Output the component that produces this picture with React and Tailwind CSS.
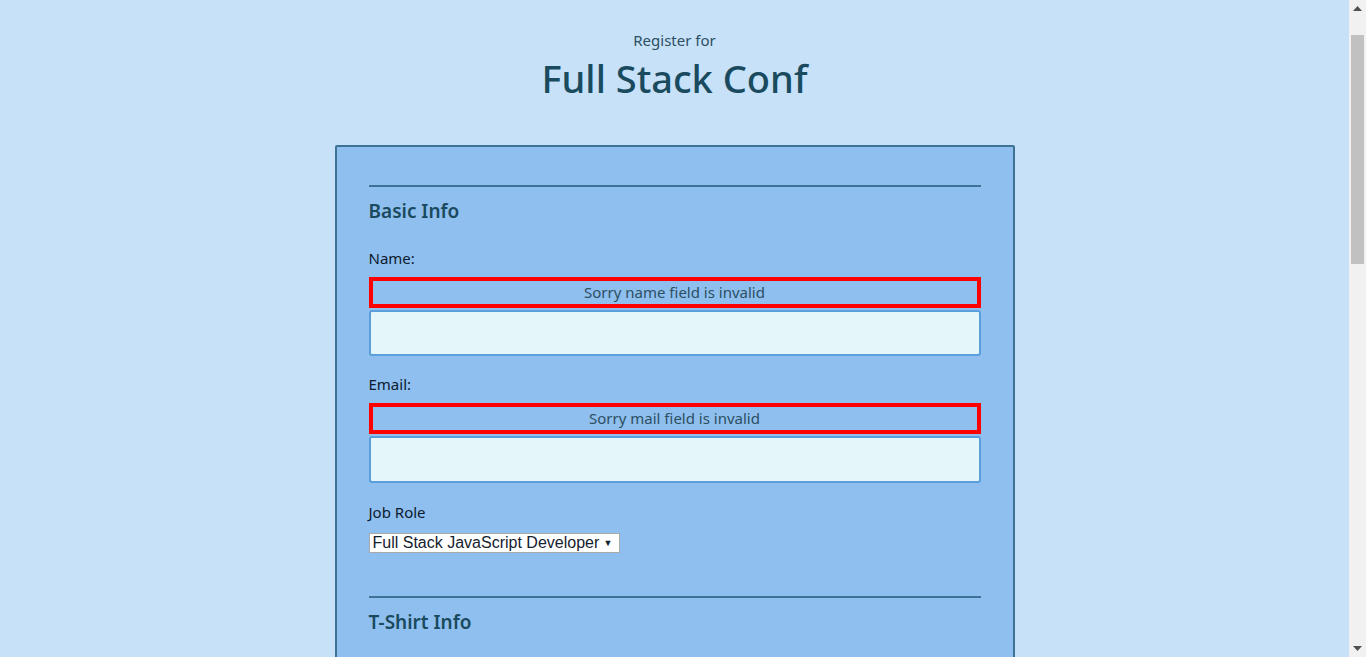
export default function App() {
  const font = { fontFamily: '"Noto Sans", "Open Sans", sans-serif' };
  return (
    <div className="flex items-start bg-[#c6e1f8]">
      <div className="flex-1 min-h-[1400px] text-[#184f68]" style={font}>
        <header className="pt-[30px] pb-[39px] text-center">
          <p className="text-[15px] leading-[20px] text-[#2c4f62]">Register for</p>
          <h1 className="text-[38px] leading-[56px] font-medium text-[#1a4a5e]">Full Stack Conf</h1>
        </header>

        <form className="mx-auto w-[680px] bg-[#8fbfee] border-2 border-[#3b7296] rounded-[2px] px-[32px] pt-[38px] pb-[40px]">
          <fieldset>
            <hr className="border-0 border-t-2 border-[#3b7296]" />
            <h2 className="mt-[11px] text-[19px] leading-[26px] font-semibold text-[#1a4a5e]">Basic Info</h2>

            <label className="block mt-[24px] text-[15px] leading-[20px] text-[#0b1a2e]">Name:</label>
            <div className="mt-[9px] border-4 border-[#ff0000] h-[31px] flex items-center justify-center text-[15px] text-[#2c4f62]">
              Sorry name field is invalid
            </div>
            <div className="mt-[2px] h-[46px] bg-[#e4f6fa] border-2 border-[#5a9fdc] rounded-[3px]" />

            <label className="block mt-[18px] text-[15px] leading-[20px] text-[#0b1a2e]">Email:</label>
            <div className="mt-[9px] border-4 border-[#ff0000] h-[31px] flex items-center justify-center text-[15px] text-[#2c4f62]">
              Sorry mail field is invalid
            </div>
            <div className="mt-[2px] h-[47px] bg-[#e4f6fa] border-2 border-[#5a9fdc] rounded-[3px]" />

            <label className="block mt-[19px] text-[15px] leading-[20px] text-[#0b1a2e]">Job Role</label>
            <div className="mt-[11px] w-[251px] h-[20px] bg-white border border-[#a9a9a9] flex items-center justify-between pl-[3px] pr-[6px] text-[16px] leading-[18px] text-[#14222e]" style={{ fontFamily: '"Liberation Sans", Arial, sans-serif' }}>
              <span>Full Stack JavaScript Developer</span>
              <span className="text-[9px] leading-none">▼</span>
            </div>
          </fieldset>

          <fieldset className="mt-[43px]">
            <hr className="border-0 border-t-2 border-[#3b7296]" />
            <h2 className="mt-[11px] text-[19px] leading-[26px] font-semibold text-[#1a4a5e]">T-Shirt Info</h2>
          </fieldset>
        </form>
      </div>

      <aside className="sticky top-0 w-[17px] h-[657px] bg-[#f1f1f1] flex flex-col items-center">
        <div className="h-[17px] flex items-center justify-center">
          <svg width="9" height="5" viewBox="0 0 9 5"><path d="M4.5 0L9 5H0z" fill="#505050" /></svg>
        </div>
        <div className="mt-[18px] w-[13px] h-[229px] bg-[#c1c1c1]" />
        <div className="flex-1" />
        <div className="h-[17px] flex items-center justify-center">
          <svg width="9" height="5" viewBox="0 0 9 5"><path d="M0 0H9L4.5 5z" fill="#505050" /></svg>
        </div>
      </aside>
    </div>
  );
}
